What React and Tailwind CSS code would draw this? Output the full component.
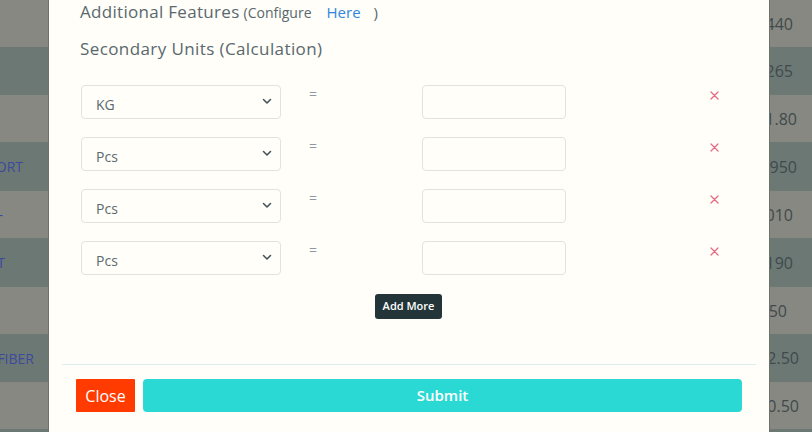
import { useState } from 'react';

const rows = [
  { h: 'h-[47px]', bg: 'bg-[#878881]', left: '', lp: 'pr-[20px]', right: '1440', rp: 'pr-[19px]' },
  { h: 'h-[48px]', bg: 'bg-[#6c7874]', left: '', lp: 'pr-[20px]', right: '1265', rp: 'pr-[19px]' },
  { h: 'h-[47px]', bg: 'bg-[#878881]', left: '', lp: 'pr-[20px]', right: '1011.80', rp: 'pr-[15px]' },
  { h: 'h-[49px]', bg: 'bg-[#6c7874]', left: 'SUPPORT', lp: 'pr-[25px]', right: '11950', rp: 'pr-[15px]' },
  { h: 'h-[47px]', bg: 'bg-[#878881]', left: 'SHEET -', lp: 'pr-[45px]', right: '11010', rp: 'pr-[19px]' },
  { h: 'h-[49px]', bg: 'bg-[#6c7874]', left: 'SHEET', lp: 'pr-[43px]', right: '11190', rp: 'pr-[19px]' },
  { h: 'h-[47px]', bg: 'bg-[#878881]', left: '', lp: 'pr-[20px]', right: '150', rp: 'pr-[25px]' },
  { h: 'h-[48px]', bg: 'bg-[#6c7874]', left: 'FIBER', lp: 'pr-[14px]', right: '112.50', rp: 'pr-[13px]' },
  { h: 'h-[47px]', bg: 'bg-[#878881]', left: '', lp: 'pr-[20px]', right: '110.50', rp: 'pr-[13px]' },
  { h: 'h-[10px]', bg: 'bg-[#6c7874]', left: '', lp: 'pr-[20px]', right: '', rp: 'pr-[13px]' },
];

const units = ['KG', 'Pcs', 'Pcs', 'Pcs'];

function Chevron() {
  return (
    <svg width="10" height="7" viewBox="0 0 10 7" className="text-[#44545a] mt-[-2px]">
      <path d="M1.5 1.5 L5 5 L8.5 1.5" fill="none" stroke="currentColor" strokeWidth="1.6" strokeLinecap="round" strokeLinejoin="round" />
    </svg>
  );
}

function Cross() {
  return (
    <svg width="9" height="9" viewBox="0 0 9 9" className="text-[#e46a84]">
      <path d="M1 1 L8 8 M8 1 L1 8" fill="none" stroke="currentColor" strokeWidth="1.3" strokeLinecap="round" />
    </svg>
  );
}

export default function App() {
  const [values, setValues] = useState(['', '', '', '']);

  return (
    <div className="w-[812px] h-[432px] overflow-hidden flex font-['Open_Sans',sans-serif]">
      {/* left part of the table behind */}
      <div className="w-[49px] shrink-0 min-w-0 flex flex-col border-r border-[#70716a]">
        {rows.map((r, i) => (
          <div key={i} className={`${r.h} ${r.bg} ${r.lp} shrink-0 flex items-center justify-end overflow-hidden whitespace-nowrap text-[14px] text-[#3c4a9c]`}>
            {r.left}
          </div>
        ))}
      </div>

      {/* modal */}
      <div className="w-[720px] shrink-0 h-full bg-[#fffef8] flex flex-col">
        <div className="px-[31px]">
          <div className="h-[24px] flex items-center text-[#59686e]">
            <span className="text-[17px] tracking-[0.3px]">Additional Features</span>
            <span className="text-[14px] ml-[4px]">(Configure</span>
            <span className="text-[15px] text-[#2f86e0] ml-[15px]">Here</span>
            <span className="text-[15px] ml-[13px]">)</span>
          </div>
          <div className="h-[24px] mt-[13px] flex items-center text-[17px] tracking-[0.4px] text-[#59686e]">
            Secondary Units (Calculation)
          </div>

          <div className="mt-[24px] flex flex-col gap-[18px]">
            {units.map((u, i) => (
              <div key={i} className="flex items-start">
                <div className="w-[200px] h-[34px] ml-[1px] border border-[#e3e3de] rounded-[4px] flex items-center justify-between pl-[14px] pr-[8px] text-[14px] text-[#5b6a70]">
                  <span className="pt-[4px]">{u}</span>
                  <Chevron />
                </div>
                <div className="w-[141px] pl-[28px] pt-[1px] text-[14px] leading-[16px] text-[#8b9aa0]">=</div>
                <input
                  value={values[i]}
                  onChange={(e) => setValues(values.map((v, j) => (j === i ? e.target.value : v)))}
                  className="w-[144px] h-[34px] border border-[#e3e3de] rounded-[4px] bg-transparent outline-none px-2 text-[14px]"
                />
                <div className="ml-[144px] mt-[6px]">
                  <Cross />
                </div>
              </div>
            ))}
          </div>

          <div className="mt-[19px] flex justify-center">
            <button className="ml-[-1px] h-[25px] px-[8px] rounded-[3px] bg-[#233539] text-white text-[11px] font-semibold">
              Add More
            </button>
          </div>
        </div>

        <div className="mt-[45px] mx-[13px] border-t border-[#dcedf3]" />

        <div className="mt-[14px] px-[27px] flex gap-[8px]">
          <button className="w-[59px] h-[33px] bg-[#ff3b00] text-white text-[16px] rounded-[1px]">Close</button>
          <button className="w-[599px] h-[33px] bg-[#2bd9d4] text-white text-[15px] font-semibold rounded-[4px]">Submit</button>
        </div>
      </div>

      {/* right part of the table behind */}
      <div className="w-[43px] shrink-0 min-w-0 flex flex-col border-l border-[#70716a]">
        {rows.map((r, i) => (
          <div key={i} className={`${r.h} ${r.bg} ${r.rp} shrink-0 flex items-center justify-end overflow-hidden whitespace-nowrap text-[16px] text-[#3f4a4c]`}>
            {r.right}
          </div>
        ))}
      </div>
    </div>
  );
}
